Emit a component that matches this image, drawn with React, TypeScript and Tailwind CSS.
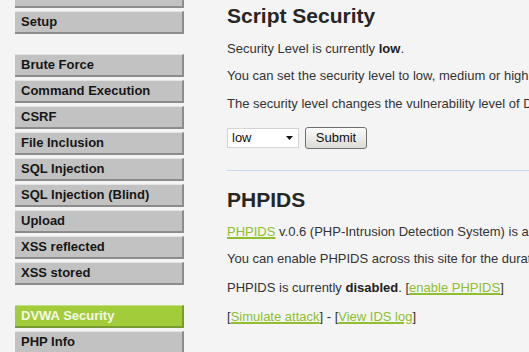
import React from "react";

const groups: string[][] = [
  ["Instructions", "Setup"],
  ["Brute Force", "Command Execution", "CSRF", "File Inclusion", "SQL Injection", "SQL Injection (Blind)", "Upload", "XSS reflected", "XSS stored"],
  ["DVWA Security", "PHP Info", "About"],
];

function Item({ label }: { label: string }) {
  const selected = label === "DVWA Security";
  return (
    <div
      className={
        "h-[23px] border-t border-b-2 border-r-2 pl-[6px] text-[13px] font-bold leading-[20px] " +
        (selected
          ? "bg-[#a2cc3a] text-[#f4f8e8] border-t-[#c6e07f] border-b-[#7a9a34] border-r-[#7a9a34]"
          : "bg-[#c2c2c2] text-[#161616] border-t-[#e4e4e4] border-b-[#8c8c8c] border-r-[#8c8c8c]")
      }
    >
      {label}
    </div>
  );
}

export default function App() {
  return (
    <div
      className="w-[529px] h-[352px] overflow-hidden bg-[#f4f4f4] flex"
      style={{ fontFamily: '"Liberation Sans", Arial, sans-serif' }}
    >
      <div className="ml-[15px] w-[169px] mt-[-15px] flex flex-col gap-[20px] shrink-0">
        {groups.map((g, i) => (
          <div key={i} className="flex flex-col gap-[3px]">
            {g.map((l) => (
              <Item key={l} label={l} />
            ))}
          </div>
        ))}
      </div>
      <div className="ml-[43px] flex-1 min-w-0 text-[13px] text-[#333333] whitespace-nowrap">
        <h1 className="text-[21px] font-bold text-[#262626] leading-[26px] mt-[3px]">Script Security</h1>
        <p className="mt-[12px] leading-[16px]">
          Security Level is currently <b className="text-[#222]">low</b>.
        </p>
        <p className="mt-[11px] leading-[16px]">You can set the security level to low, medium or high.</p>
        <p className="mt-[12px] leading-[16px]">The security level changes the vulnerability level of DVWA.</p>
        <div className="mt-[15px] flex items-center gap-[6px]">
          <div className="w-[72px] h-[20px] bg-white border border-[#d4d4d4] flex items-center justify-between pl-[4px] pr-[5px] text-[13px] text-[#111]">
            <span>low</span>
            <svg width="7" height="4" viewBox="0 0 7 4"><path d="M0 0h7L3.5 4z" fill="#111" /></svg>
          </div>
          <div className="w-[62px] h-[22px] rounded-[3px] border border-[#6f6f6f] bg-gradient-to-b from-[#fbfbfb] to-[#dcdcd6] flex items-center justify-center text-[13px] text-[#111]">
            Submit
          </div>
        </div>
        <div className="mt-[21px] h-px bg-[#c8d6ee]" />
        <h1 className="text-[21px] font-bold text-[#262626] leading-[26px] mt-[16px]">PHPIDS</h1>
        <p className="mt-[11px] leading-[16px]">
          <a className="text-[#8fbf2f] underline decoration-[1.5px]">PHPIDS</a> v.0.6 (PHP-Intrusion Detection System) is a security layer for PHP based web applications.
        </p>
        <p className="mt-[11px] leading-[16px]">You can enable PHPIDS across this site for the duration of your session.</p>
        <p className="mt-[13px] leading-[16px]">
          PHPIDS is currently <b className="text-[#222]">disabled</b>. [<a className="text-[#8fbf2f] underline decoration-[1.5px]">enable PHPIDS</a>]
        </p>
        <p className="mt-[13px] leading-[16px]">
          [<a className="text-[#8fbf2f] underline decoration-[1.5px]">Simulate attack</a>] - [<a className="text-[#8fbf2f] underline decoration-[1.5px]">View IDS log</a>]
        </p>
      </div>
    </div>
  );
}
